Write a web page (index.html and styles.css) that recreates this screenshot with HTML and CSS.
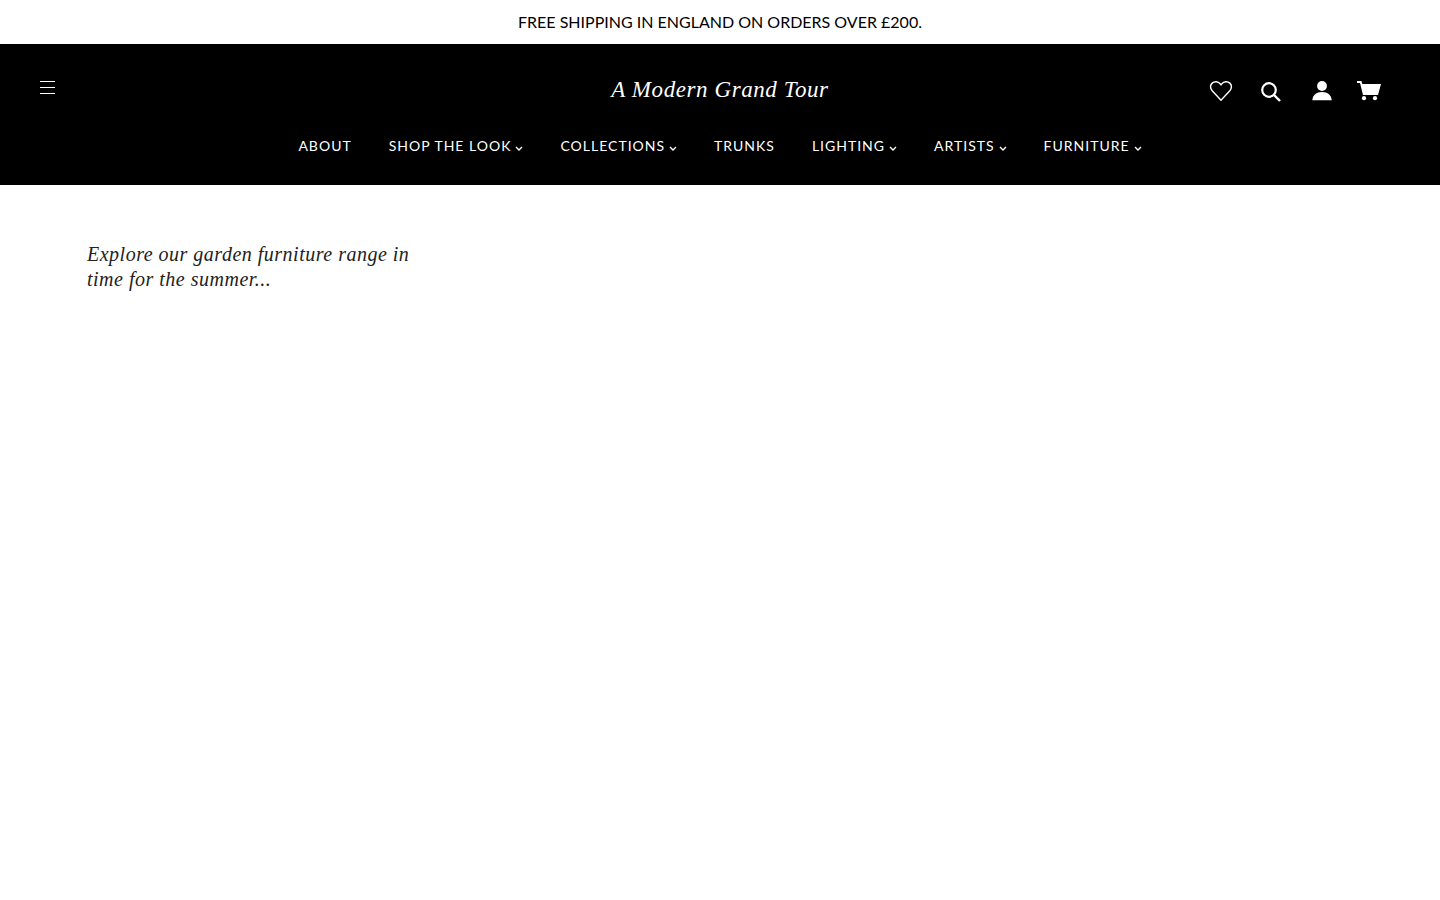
FILE: index.html
```html
<!DOCTYPE html>
<html lang="en">
<head>
<meta charset="utf-8">
<title>A Modern Grand Tour</title>
<link rel="stylesheet" href="styles.css">
</head>
<body>
<p class="announcement">FREE SHIPPING IN ENGLAND ON ORDERS OVER £200.</p>
<header class="header">
  <div class="header-top">
    <button class="menu-button" type="button" aria-label="Menu"><svg width="15" height="13" viewBox="0 0 15 13"><path d="M0 .5h15M0 6.5h15M0 12.5h15" stroke="currentColor"/></svg></button>
    <a class="brand" href="#">A Modern Grand Tour</a>
    <div class="tools">
      <a class="tool" href="#" aria-label="Wishlist"><svg width="28" height="24" viewBox="-2 0 28 24"><path d="M12 21.300 3.200 11.800C1 9.300 1 6 3.200 4.100c2.300-2 6-1.800 7.900.6l.9 1.200.9-1.200c1.900-2.400 5.600-2.600 7.900-.6 2.200 1.900 2.200 5.200 0 7.700z" fill="none" stroke="currentColor" stroke-width="1.400"/></svg></a>
      <button class="tool" type="button" aria-label="Search"><svg width="28" height="24" viewBox="-2 -1 28 24"><circle cx="10" cy="10" r="6.800" fill="none" stroke="currentColor" stroke-width="2.200"/><path d="m15 15 6 6" stroke="currentColor" stroke-width="2.400"/></svg></button>
      <a class="tool" href="#" aria-label="Account"><svg width="28" height="24" viewBox="-3 0 28 24"><circle cx="12" cy="7" r="4.900" fill="currentColor"/><path d="M2.300 21.200c.3-5 4-8.200 9.700-8.200s9.400 3.200 9.700 8.200z" fill="currentColor"/></svg></a>
      <a class="tool" href="#" aria-label="Cart"><svg width="28" height="24" viewBox="0 0 28 24"><path d="M0 2h4.500l.8 3H24l-3 11H6L3 4H0z" fill="currentColor"/><circle cx="7" cy="19.200" r="2.100" fill="currentColor"/><circle cx="18" cy="19.200" r="2.100" fill="currentColor"/></svg></a>
    </div>
  </div>
  <nav class="nav">
    <a href="#">ABOUT</a>
    <a href="#">SHOP THE LOOK<svg class="caret" viewBox="0 0 8 5"><path d="m1 1 3 3 3-3"/></svg></a>
    <a href="#">COLLECTIONS<svg class="caret" viewBox="0 0 8 5"><path d="m1 1 3 3 3-3"/></svg></a>
    <a href="#">TRUNKS</a>
    <a href="#">LIGHTING<svg class="caret" viewBox="0 0 8 5"><path d="m1 1 3 3 3-3"/></svg></a>
    <a href="#">ARTISTS<svg class="caret" viewBox="0 0 8 5"><path d="m1 1 3 3 3-3"/></svg></a>
    <a href="#">FURNITURE<svg class="caret" viewBox="0 0 8 5"><path d="m1 1 3 3 3-3"/></svg></a>
  </nav>
</header>
<main class="main">
  <h2 class="intro">Explore our garden furniture range in time for the summer...</h2>
</main>
</body>
</html>
```
FILE: styles.css
```css
* { box-sizing: border-box; }
body { margin: 0; background: #fff; color: #222; font-family: Lato, sans-serif; }
a { color: inherit; text-decoration: none; }
button { padding: 0; border: 0; background: none; color: inherit; }
svg { display: block; }
.announcement { margin: 0; padding: 10px; color: #000; font-size: 16px; line-height: 24px; text-align: center; }
.header { padding: 29px 40px 28px; background: #000; color: #fff; }
.header-top { display: grid; grid-template-columns: 1fr auto 1fr; align-items: start; }
.menu-button { justify-self: start; padding-top: 8px; }
.brand { font: italic 23px/33px "Liberation Serif", serif; letter-spacing: 0.025em; }
.tools { display: flex; justify-self: end; gap: 22px; padding: 6px 15px 0 0; }
.nav { display: flex; justify-content: center; gap: 37px; padding-top: 28px; font-size: 14px; line-height: 23px; letter-spacing: 1px; }
.nav a { display: flex; align-items: center; }
.caret { width: 8px; height: 5px; margin: 6px 0 0 4px; fill: none; stroke: currentColor; stroke-width: 1.4; }
.main { padding: 57px 87px; }
.intro { max-width: 340px; margin: 0; font: italic 20px/25px "Liberation Serif", serif; letter-spacing: 0.025em; }
```
